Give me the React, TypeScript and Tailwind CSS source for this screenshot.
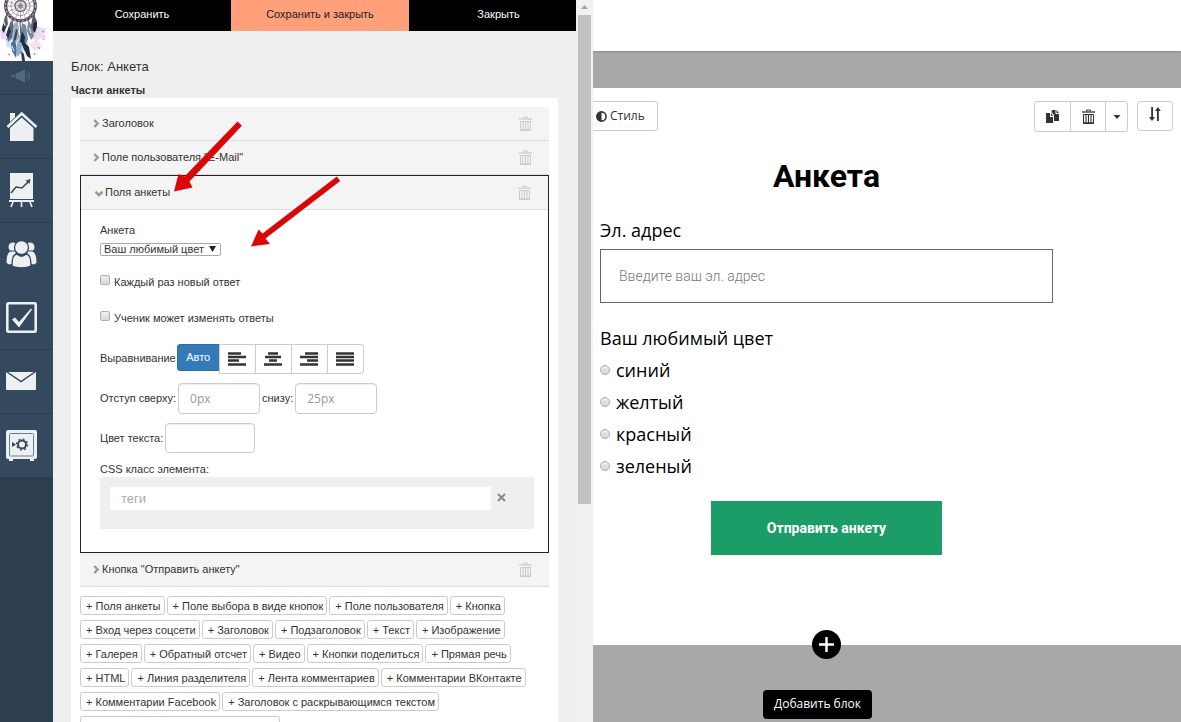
import React from "react";

const parts = [
  ["Поля анкеты", "Поле выбора в виде кнопок", "Поле пользователя", "Кнопка"],
  ["Вход через соцсети", "Заголовок", "Подзаголовок", "Текст", "Изображение"],
  ["Галерея", "Обратный отсчет", "Видео", "Кнопки поделиться", "Прямая речь"],
  ["HTML", "Линия разделителя", "Лента комментариев", "Комментарии ВКонтакте"],
  ["Комментарии Facebook", "Заголовок с раскрывающимся текстом"],
];

const colors = ["синий", "желтый", "красный", "зеленый"];

function TrashIcon({ className }: { className: string }) {
  return (
    <svg className={className} width="13" height="15" viewBox="0 0 13 15" fill="none" stroke="currentColor">
      <path d="M4.500 2.500v-1.500h4v1.500" />
      <path d="M0 3h13" strokeWidth="1.300" />
      <path d="M1.500 5.500h10v9h-10z" />
      <path d="M4 5v9M6.500 5v9M9 5v9" strokeWidth="1.100" />
      <path d="M1 14h11" strokeWidth="1.400" />
    </svg>
  );
}

function Chevron({ down = false }: { down?: boolean }) {
  return down ? (
    <svg className="shrink-0 text-[#999]" width="8" height="8" viewBox="0 0 8 8" fill="none" stroke="currentColor" strokeWidth="2.400">
      <path d="M0.500 2.700L4 6l3.500-3.300" />
    </svg>
  ) : (
    <svg className="shrink-0 text-[#999]" width="7" height="9" viewBox="0 0 7 9" fill="none" stroke="currentColor" strokeWidth="2.400">
      <path d="M1.300 1l3.400 3.500L1.300 8" />
    </svg>
  );
}

function AlignIcon({ d }: { d: string }) {
  return (
    <svg width="18" height="14" viewBox="0 0 18 14" stroke="#333" strokeWidth="2.400">
      <path d={d} />
    </svg>
  );
}

function PartRow({ title }: { title: string }) {
  return (
    <div className="flex h-[34px] items-center justify-between border-b border-[#ddd] bg-[#f4f4f4] pr-[17px] pl-[13px]">
      <button className="flex items-center gap-[2px]">
        <Chevron />
        {title}
      </button>
      <button aria-label="Удалить">
        <TrashIcon className="text-[#ccc]" />
      </button>
    </div>
  );
}

function Logo() {
  return (
    <svg width="53" height="61" viewBox="0 0 53 61" fill="none">
      <rect width="53" height="61" fill="#fff" />
      <g opacity="0.45">
        <path d="M0 31c2-5 5-4 6 1s-1 9-5 7z" fill="#d9a6e8" />
        <path d="M33 28c6-4 9 2 14 0l-3 6 3 5-7-1-4 5-5-7z" fill="#d5b8e6" />
        <path d="M5 38l8-5 6 8-4 9-8-3z" fill="#8fc6f0" />
        <path d="M29 44l9-4 4 7-8 4z" fill="#e8bed0" />
        <path d="M17 39l10-2 2 11-8 4z" fill="#6db9ea" />
      </g>
      <circle cx="20.500" cy="6" r="14.800" stroke="#55495c" strokeWidth="3.200" />
      <circle cx="20.500" cy="6" r="15" stroke="#b8a7b6" strokeWidth="1.200" strokeDasharray="2 2" />
      <circle cx="20.500" cy="6" r="9.500" stroke="#837888" strokeWidth="1" strokeDasharray="3 1" />
      <circle cx="20.500" cy="6" r="5.500" stroke="#66586d" strokeWidth="1.400" />
      <circle cx="20.500" cy="6" r="2" fill="#33283d" />
      <path d="M20.500 -8v28M6.500 6h28M10 -4l21 20M31 -4L10 16M15 -7l11 26M26 -7L15 19M7 1l27 11M34 1L7 12" stroke="#9a90a0" strokeWidth="0.700" />
      <path d="M7 14L5 25M13 19l-2 16M20 21l1 18M28 19l4 16M34 13l2 12" stroke="#63525b" strokeWidth="1" />
      <path d="M5 16l2-1 1 9-4 8-2-2z" fill="#57636f" />
      <path d="M3 24l3 2-2 7-2-3z" fill="#252a3f" />
      <path d="M11 20l3 6-2 12-4 4-1-9z" fill="#596c84" />
      <path d="M9 26l2 5-3 8-2-4z" fill="#28344d" />
      <path d="M14 23l4-1 2 15-5 6-3-4z" fill="#a3aeb9" />
      <path d="M16 29l2 1-2 10-3 2z" fill="#3b4864" />
      <path d="M22 23l4 2 2 14-4 9-5-6z" fill="#718aa6" />
      <path d="M22 31l3 6-1 10-4-5z" fill="#202a40" />
      <path d="M28 21l4 4 2 11-3 4-4-9z" fill="#828996" />
      <path d="M33 14l4 7v7l-3 5-3-7z" fill="#555c72" />
      <path d="M34 22l3 1-2 10-2-3z" fill="#22233b" />
      <path d="M11 43l4-3 2 10-1 8-4-7z" fill="#546e91" />
      <path d="M18 41l4 2-1 10-4 4-1-8z" fill="#8eadc2" />
      <path d="M24 42l5 5 2 12-4-3-4-9z" fill="#232c45" />
      <path d="M21 51l3 3 1 7h-3z" fill="#293b59" />
      <path d="M6 39l2 1M42 31l2 1M38 47l2 2M8 54l2 1M43 39l1 1M34 53l1 2" stroke="#b384bd" strokeWidth="1.300" />
      <path d="M12 46l2 5M18 30l2 5M29 28l2 5M4 22l1 4" stroke="#eaf1f5" strokeWidth="1" />
    </svg>
  );
}

function Sidebar() {
  const item = "flex h-16 items-center border-b border-[#2b3d51] pb-px pl-[6px] hover:bg-[#3d5268]";
  return (
    <nav className="w-[53px] shrink-0 bg-[#2d3e50]">
      <Logo />
      <div className="bg-[#34495e] text-[#ecf0f1]">
        <a href="#news" aria-label="Новости" className="flex h-[34px] items-center border-b border-[#2b3d51] pb-1 pl-[11px]">
          <svg width="20" height="14" viewBox="0 0 20 14" fill="#536a81">
            <path d="M5 4.500L14 0.500v13l-9-4z" />
            <circle cx="1.700" cy="7" r="1.500" />
            <path d="M3.500 5.500h1v3h-1z" />
            <path d="M15.500 4.500q1.500 2.500 0 5M17 2.500q3 4.500 0 9" fill="none" stroke="#4b627a" strokeWidth="1.200" />
          </svg>
        </a>
        <a href="#home" aria-label="Главная" className={item}>
          <svg width="32" height="30" viewBox="0 0 32 30" fill="currentColor">
            <path d="M4 2h5v4L4 11z" />
            <path d="M1.500 16L15.700 2.500 30.500 16" fill="none" stroke="currentColor" strokeWidth="2.600" />
            <path d="M15.700 6.500L27.500 17v13H4V17z" />
          </svg>
        </a>
        <a href="#stats" aria-label="Статистика" className={item}>
          <svg className="ml-[3px]" width="26" height="36" viewBox="0 0 26 36">
            <path d="M1 1h23v26H1zM0 28h25v2H0z" fill="currentColor" />
            <path d="M4 30l-2 5M12.500 30v5M21 30l2 5" stroke="currentColor" strokeWidth="1.600" />
            <path d="M2 21l5-6 6 1 7-7" fill="none" stroke="#34495e" strokeWidth="1.600" />
            <path d="M16.500 8.500L21.500 7l-1 5z" fill="#34495e" />
          </svg>
        </a>
        <a href="#users" aria-label="Ученики" className="flex h-[63px] items-center pb-[2px] pl-[6px]">
          <svg width="31" height="28" viewBox="0 0 31 28" fill="currentColor" stroke="#34495e">
            <circle cx="7" cy="7" r="5" />
            <circle cx="24" cy="7" r="5" />
            <path d="M0 23c0-6 1-11 5-12h5v13l-7 1zM31 23c0-6-1-11-5-12h-5v13l7 1z" />
            <circle cx="15.500" cy="7.500" r="7" strokeWidth="1.300" />
            <path d="M6 26c0-7 1-12 5-12 3 3 6 3 9 0 4 0 5 5 5 12-5 2.500-14 2.500-19 0z" strokeWidth="1.300" />
          </svg>
        </a>
        <a href="#tasks" aria-label="Задания" className={item}>
          <svg width="31" height="31" viewBox="0 0 31 31" fill="none">
            <rect x="1.300" y="1.300" width="28.400" height="28.400" rx="1" stroke="currentColor" strokeWidth="2.600" />
            <path d="M6 17.500l3-2 4 4.500L25 6.500l1 1L13 25.500z" fill="currentColor" />
          </svg>
        </a>
        <a href="#mail" aria-label="Почта" className={item}>
          <svg width="30" height="20" viewBox="0 0 30 20">
            <rect y="1" width="30" height="18" rx="1" fill="currentColor" />
            <path d="M1 1l14 9.500L29 1" fill="none" stroke="#34495e" strokeWidth="1.500" />
          </svg>
        </a>
        <a href="#safe" aria-label="Финансы" className={item}>
          <svg width="31" height="31" viewBox="0 0 31 31" fill="none">
            <path d="M2 0h27q2 0 2 2v25q0 2-2 2h-1v2h-4v-2H7v2H3v-2H2q-2 0-2-2V2q0-2 2-2z" fill="currentColor" />
            <rect x="3.500" y="3.500" width="24" height="22.500" rx="1" stroke="#6c7f91" strokeWidth="1" />
            <circle cx="16" cy="14.500" r="4" stroke="#34495e" strokeWidth="2" />
            <circle cx="16" cy="14.500" r="5.500" stroke="#34495e" strokeWidth="1.200" strokeDasharray="2 2.300" />
            <path d="M6 12l4 2.500L6 17z" fill="#34495e" />
          </svg>
        </a>
      </div>
    </nav>
  );
}

function ActivePart() {
  const check =
    "mt-px h-[10px] w-[10px] appearance-none rounded-[2px] border border-[#b0b0b0] bg-linear-to-b from-[#eee] to-[#d8d8d8] checked:bg-[#337ab7]";
  const box =
    "rounded border border-[#ccc] bg-white px-[11px] font-['Open_Sans',sans-serif] text-xs shadow-[inset_0_1px_1px_#eee] placeholder:text-[#999]";
  const align = "-ml-px flex h-[30px] w-[37px] items-center justify-center border border-[#ccc] bg-white";
  return (
    <section className="border border-[#222] bg-white">
      <div className="flex h-[34px] items-center justify-between border-b border-[#ddd] bg-[#f4f4f4] pr-[17px] pl-[14px]">
        <button className="flex items-center gap-[2px]">
          <Chevron down />
          Поля анкеты
        </button>
        <button aria-label="Удалить">
          <TrashIcon className="text-[#ccc]" />
        </button>
      </div>
      <div className="px-[19px] pt-3 pb-[23px]">
        <label htmlFor="form" className="block h-[21px] leading-4">Анкета</label>
        <div className="relative w-[121px]">
          <select
            id="form"
            className="block h-[13px] w-full appearance-none rounded-[2px] border border-[#a9a9a9] bg-white pl-[3px] text-[11px] leading-[11px]"
          >
            <option>Ваш любимый цвет</option>
          </select>
          <svg className="pointer-events-none absolute top-[3px] right-[5px]" width="7" height="6" viewBox="0 0 7 6">
            <path d="M0 0h7L3.500 6z" fill="#222" />
          </svg>
        </div>
        <div className="mt-[18px] flex h-4 items-start gap-1">
          <input id="again" type="checkbox" className={check} />
          <label htmlFor="again" className="leading-4">Каждый раз новый ответ</label>
        </div>
        <div className="mt-5 flex h-4 items-start gap-1">
          <input id="edit" type="checkbox" className={check} />
          <label htmlFor="edit" className="leading-4">Ученик может изменять ответы</label>
        </div>
        <div className="mt-[18px] flex h-[30px] gap-px">
          <span className="leading-7">Выравнивание</span>
          <div className="flex items-start">
            <button className="h-[27px] w-[43px] rounded-l-[3px] border border-[#2e6da4] bg-[#337ab7] text-white">Авто</button>
            <button className={align} aria-label="По левому краю">
              <AlignIcon d="M0 1.500h13M0 5h18M0 8.500h11M0 12.500h18" />
            </button>
            <button className={align} aria-label="По центру">
              <AlignIcon d="M4 1.500h10M1 5h16M5 8.500h8M0 12.500h18" />
            </button>
            <button className={align} aria-label="По правому краю">
              <AlignIcon d="M5 1.500h13M0 5h18M7 8.500h11M0 12.500h18" />
            </button>
            <button className={align + " rounded-r-[3px]"} aria-label="По ширине">
              <AlignIcon d="M0 1.500h18M0 5h18M0 8.500h18M0 12.500h18" />
            </button>
          </div>
        </div>
        <div className="mt-[9px] flex h-[31px] items-center gap-[2px]">
          <label htmlFor="top">Отступ сверху:</label>
          <input id="top" placeholder="0px" className={box + " h-[31px] w-[82px]"} />
          <label htmlFor="bottom">снизу:</label>
          <input id="bottom" placeholder="25px" className={box + " h-[31px] w-[82px]"} />
        </div>
        <div className="mt-[9px] flex h-[30px] items-center gap-[2px]">
          <label htmlFor="color">Цвет текста:</label>
          <input id="color" className={box + " h-[30px] w-[90px]"} />
        </div>
        <label htmlFor="css" className="mt-2 block leading-4">CSS класс элемента:</label>
        <div className="mr-[-5px] flex h-[52px] items-start bg-[#efefef] py-[10px] pr-7 pl-[10px]">
          <input id="css" placeholder="теги" className="h-[23px] min-w-0 flex-1 bg-white px-[11px] text-[13px] placeholder:text-[#aaa]" />
          <button className="flex h-5 w-[15px] items-center justify-end" aria-label="Очистить">
            <svg width="9" height="9" viewBox="0 0 9 9" stroke="#888" strokeWidth="2">
              <path d="M1 1l7 7M8 1L1 8" />
            </svg>
          </button>
        </div>
      </div>
    </section>
  );
}

function EditorPanel() {
  const add = "h-[19px] rounded-[3px] border border-[#ccc] bg-white pr-[3px] pl-[5px] leading-4 whitespace-nowrap";
  return (
    <aside className="relative flex w-[540px] shrink-0 overflow-hidden bg-[#efefef] text-[11px] text-[#333]">
      <div className="min-w-0 flex-1">
        <div className="flex h-[31px] bg-black pb-[3px] text-white">
          <button className="w-[178px]">Сохранить</button>
          <button className="-mb-[3px] w-[178px] bg-[#ffa07a] pb-[3px] text-[#222]">Сохранить и закрыть</button>
          <button className="flex-1 pl-3">Закрыть</button>
        </div>
        <div className="px-[18px] pt-[26px]">
          <h1 className="text-[13px] leading-5">Блок: Анкета</h1>
          <h2 className="mt-[5px] leading-4 font-bold">Части анкеты</h2>
          <div className="bg-white p-[9px]">
            <PartRow title="Заголовок" />
            <PartRow title={'Поле пользователя "E-Mail"'} />
            <ActivePart />
            <PartRow title={'Кнопка "Отправить анкету"'} />
            <div className="mt-[9px] flex flex-col gap-[5px]">
              {parts.map((row) => (
                <div key={row[0]} className="flex gap-[2px]">
                  {row.map((name) => (
                    <button key={name} className={add}>
                      + {name}
                    </button>
                  ))}
                </div>
              ))}
              <button className={add + " w-[200px]"} aria-label="Ещё" />
            </div>
          </div>
        </div>
      </div>
      {/* scrollbar */}
      <div className="flex w-[17px] flex-col bg-[#f1f1f1] px-[2px]">
        <svg className="mx-auto mt-[5px] mb-[6px]" width="7" height="4" viewBox="0 0 7 4">
          <path d="M0 4L3.500 0 7 4z" fill="#a3a3a3" />
        </svg>
        <div className="h-[489px] bg-[#c1c1c1]" />
      </div>
      {/* pointers */}
      <svg className="pointer-events-none absolute top-[115px] left-[115px]" width="180" height="140" viewBox="168 115 180 140" fill="#d80808">
        <path d="M237.500 121.500L241.900 125.700 189.500 181.500 192.500 187.500 174 191.500 178.500 174 184.500 176.500z" />
        <path d="M336.800 176.500L340.200 181 265.500 238.500 270 244 251 246.500 258.500 229.500 262.500 233.500z" />
      </svg>
    </aside>
  );
}

function Preview() {
  const tool = "flex items-center justify-center border border-[#ccc] bg-white text-[#333]";
  return (
    <main className="flex min-w-0 flex-1 flex-col bg-[#a8a8a8] font-['Open_Sans',sans-serif] text-black">
      <div className="h-[51px] shrink-0 bg-white shadow-[0_1px_2px_#888]" />
      <div className="relative mt-[37px] h-[557px] shrink-0 bg-white">
        <div className="flex items-start pt-[13px] pr-2">
          <button className={tool + " h-[30px] w-[65px] justify-start gap-[3px] rounded-r-[3px] border-l-0 pl-[3px] text-xs"}>
            <svg width="11" height="11" viewBox="0 0 11 11">
              <circle cx="5.500" cy="5.500" r="4.600" fill="none" stroke="#333" strokeWidth="1.600" />
              <path d="M5.500 0.500a5 5 0 0 0 0 10z" fill="#333" />
            </svg>
            Стиль
          </button>
          <div className="ml-auto flex">
            <button className={tool + " h-[31px] w-[37px] rounded-l-[3px]"} aria-label="Копировать">
              <svg width="14" height="14" viewBox="0 0 14 14" fill="#333">
                <path d="M0 3h4v4h3v6H0zM5 3l2 3H5z" />
                <path d="M6 0h3.500v4H13v7H8V5L5.500 2zM10.500 0L13 3h-2.500z" />
              </svg>
            </button>
            <button className={tool + " -ml-px h-[31px] w-9"} aria-label="Удалить">
              <TrashIcon className="text-[#333]" />
            </button>
            <button className={tool + " -ml-px h-[31px] w-[23px] rounded-r-[3px]"} aria-label="Ещё">
              <svg width="8" height="4" viewBox="0 0 8 4">
                <path d="M0.500 0h7L4 4z" fill="#333" />
              </svg>
            </button>
          </div>
          <button className={tool + " ml-[9px] h-[30px] w-9 rounded-[3px] pb-1"} aria-label="Переместить">
            <svg width="12" height="14" viewBox="0 0 12 14" fill="#333">
              <path d="M2.200 0h1.800v10h2L3 14 0 10h2.200zM8 14h1.800V4h2L9 0 6 4h2z" />
            </svg>
          </button>
        </div>
        <form className="pr-32 pl-[7px] text-lg" onSubmit={(e) => e.preventDefault()}>
          <h2 className="mt-6 text-center font-[Roboto,sans-serif] text-[32px] leading-10 font-bold">Анкета</h2>
          <label htmlFor="email" className="mt-5 block leading-7">Эл. адрес</label>
          <input
            id="email"
            type="email"
            placeholder="Введите ваш эл. адрес"
            className="mt-[5px] block h-[54px] w-full border border-[#666] px-[18px] font-[Roboto,sans-serif] text-sm font-light placeholder:text-[#777]"
          />
          <fieldset className="mt-[21px]">
            <legend className="leading-7">Ваш любимый цвет</legend>
            <div className="mt-[2px]">
              {colors.map((c) => (
                <label key={c} className="flex h-8 items-center gap-[6px]">
                  <input
                    type="radio"
                    name="color"
                    className="h-[10px] w-[10px] appearance-none rounded-full border border-[#aaa] bg-linear-to-b from-[#eee] to-[#d4d4d4] checked:bg-[#333]"
                  />
                  {c}
                </label>
              ))}
            </div>
          </fieldset>
          <button className="mx-auto mt-[19px] block h-[54px] w-[231px] bg-[#1c9d68] font-[Roboto,sans-serif] text-sm font-bold text-white">
            Отправить анкету
          </button>
        </form>
        <div className="absolute right-0 -bottom-[74px] left-0 flex flex-col items-center pr-32 pl-[7px]">
          <button id="add" aria-label="Добавить блок" className="flex h-[29px] w-[29px] items-center justify-center rounded-full bg-black">
            <svg width="15" height="15" viewBox="0 0 15 15" stroke="#fff" strokeWidth="2.400">
              <path d="M7.500 0v15M0 7.500h15" />
            </svg>
          </button>
          <div role="tooltip" className="mt-[31px] mr-[18px] h-[29px] w-[109px] rounded bg-black text-center text-xs leading-7 text-white">
            Добавить блок
          </div>
        </div>
      </div>
    </main>
  );
}

export default function App() {
  return (
    <div className="flex h-screen overflow-hidden font-['Liberation_Sans',Arial,sans-serif]">
      <Sidebar />
      <EditorPanel />
      <Preview />
    </div>
  );
}
